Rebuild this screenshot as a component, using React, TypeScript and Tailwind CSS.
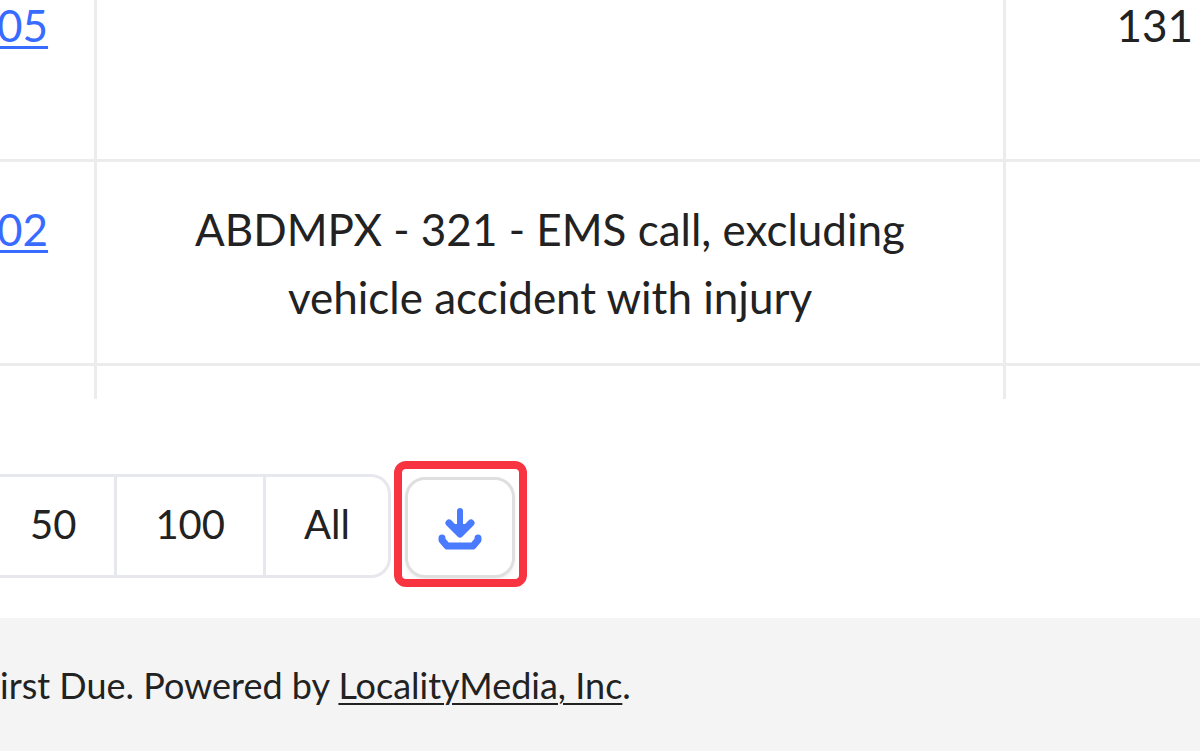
import React from 'react';

type Incident = {
  id: string;
  type: string;
  address: string;
};

const incidents: Incident[] = [
  { id: '05', type: '', address: '131' },
  {
    id: '02',
    type: 'ABDMPX - 321 - EMS call, excluding vehicle accident with injury',
    address: '',
  },
  { id: '', type: '', address: '' },
];

const pageSizes = ['50', '100', 'All'];

const DownloadIcon: React.FC = () => (
  <svg
    className="h-11 w-11"
    viewBox="0 0 44 44"
    fill="none"
    stroke="#4a7afd"
    strokeLinecap="round"
    strokeLinejoin="round"
    aria-hidden="true"
  >
    <path d="M22 4v22" strokeWidth="6" />
    <path d="M11 16l11 11 11-11" strokeWidth="7" />
    <path d="M14 18h16l-8 10z" fill="#4a7afd" strokeWidth="2" />
    <path d="M4 31v2l5 6h26l5-6v-2" strokeWidth="7" />
  </svg>
);

const IncidentTable: React.FC = () => (
  <div className="h-[399px] overflow-hidden">
    <table className="-mt-[42px] w-full table-fixed border-separate border-spacing-0 text-[44px] leading-[68px]">
      <colgroup>
        <col className="w-[97px]" />
        <col />
        <col className="w-[194px]" />
      </colgroup>
      <tbody>
        {incidents.map(({ id, type, address }, index) => (
          <tr key={index} className="h-[204px] align-top">
            <td className="border-r-3 border-b-3 border-[#ececec] pt-[33px] pb-8">
              {id && (
                <a
                  href="#"
                  className="-ml-[3px] text-[#386bff] underline decoration-3 underline-offset-4"
                >
                  {id}
                </a>
              )}
            </td>
            <td className="border-r-3 border-b-3 border-[#ececec] px-[90px] pt-[33px] pb-8 text-center">
              {type}
            </td>
            <td className="border-b-3 border-[#ececec] pt-[33px] pr-[7px] pb-8 text-right">
              {address}
            </td>
          </tr>
        ))}
      </tbody>
    </table>
  </div>
);

const App: React.FC = () => {
  return (
    <div className="flex min-h-screen flex-col overflow-hidden bg-white font-['Lato',sans-serif] text-[#222]">
      <main>
        <IncidentTable />
        <div className="mt-[75px] flex items-end gap-[14px]">
          <div className="flex h-[104px] overflow-hidden rounded-r-[20px] border-y-3 border-r-3 border-[#e7e7ee] text-[40px]">
            {pageSizes.map((size) => (
              <button
                key={size}
                type="button"
                className="border-r-3 border-[#e7e7ee] px-[38px] pb-1 first:pl-[30px] last:border-r-0"
              >
                {size}
              </button>
            ))}
          </div>
          <div className="relative">
            <button
              type="button"
              aria-label="Download"
              className="flex h-[101px] w-[110px] items-center justify-center rounded-[20px] border-3 border-[#dfdfdf] pt-[2px] shadow-md shadow-black/5"
            >
              <DownloadIcon />
            </button>
            <div className="pointer-events-none absolute -top-4 -right-3 -bottom-[9px] -left-[11px] rounded-xl border-8 border-[#f83441]" />
          </div>
        </div>
      </main>
      <footer className="mt-10 grow bg-[#f4f4f4] pt-10 text-[36px] leading-[54px]">
        irst Due. Powered by{' '}
        <a href="#" className="underline decoration-2 underline-offset-4">
          LocalityMedia, Inc
        </a>
        .
      </footer>
    </div>
  );
};

export default App;
